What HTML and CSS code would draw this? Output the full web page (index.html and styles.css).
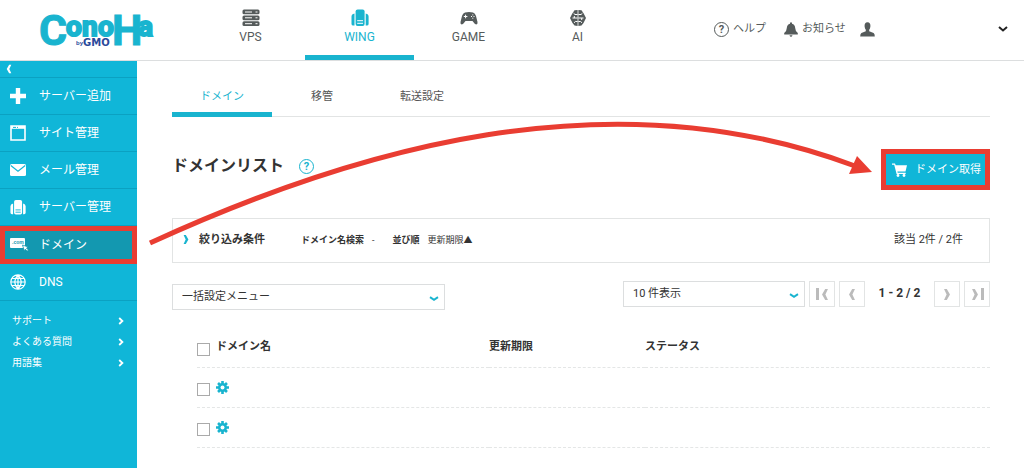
FILE: index.html
```html
<!DOCTYPE html>
<html lang="ja">
<head>
<meta charset="utf-8">
<title>ドメインリスト | ConoHa</title>
<meta name="viewport" content="width=device-width, initial-scale=1">
<link rel="stylesheet" href="styles.css">
</head>
<body>
<svg class="defs" width="0" height="0" aria-hidden="true">
  <symbol id="i-wing" viewBox="0 0 18 18">
    <rect x="4.600" y=".5" width="9" height="16.500" rx="2"/>
    <path d="M3.500 4.500v12H2.200Q.5 16.500.5 15V7.500Q.5 5 3.500 4.500zM14.700 4.500v12h1.200q1.700 0 1.700-1.500V7.500q0-2.500-2.900-3z"/>
    <path class="cut" d="M6.200 11.700h5.800M6.200 14.300h5.800"/>
  </symbol>
  <symbol id="i-gear" viewBox="0 0 14 14">
    <path fill="none" stroke="currentColor" stroke-width="2.800" d="M7 0v14M0 7h14M2.200 2.200l9.600 9.600M11.800 2.200l-9.600 9.600"/>
    <circle cx="7" cy="7" r="4.800"/><circle cx="7" cy="7" r="2.100" fill="#fff"/>
  </symbol>
  <symbol id="i-left" viewBox="0 0 8 14"><path d="M4.200 1H7.200L4.400 7l2.800 6h-3L.8 7z"/></symbol>
  <symbol id="i-right" viewBox="0 0 8 14"><path d="M3.800 1H.8l2.800 6L.8 13h3L7.200 7z"/></symbol>
  <symbol id="i-smile" viewBox="0 0 10 6"><path fill="none" stroke="currentColor" stroke-width="2" d="M1 1.200L5 3.800 9 1.200"/></symbol>
  <symbol id="i-chev" viewBox="0 0 6 8"><path fill="none" stroke="currentColor" stroke-width="1.800" d="M1.200 1l3.200 3-3.200 3"/></symbol>
</svg>

<header class="header">
  <a class="logo" href="#" aria-label="ConoHa by GMO">
    <svg width="132" height="60" viewBox="30 0 132 60" aria-hidden="true">
      <g class="logo-main">
        <text class="big" x="39" y="45">C</text>
        <text class="small" x="66" y="36">o</text>
        <text class="small" x="82" y="36">n</text>
        <text class="small" x="98" y="36">o</text>
        <text class="tall" x="112" y="45">H</text>
        <text class="small" x="138" y="36">a</text>
      </g>
      <text class="by" x="76" y="45">by</text>
      <text class="gmo" x="83" y="46">GMO</text>
    </svg>
  </a>
  <nav class="products">
    <a class="product" href="#">
      <svg width="18" height="18" viewBox="0 0 18 18"><rect x=".5" y=".5" width="17" height="4.800" rx="1.500"/><rect x=".5" y="6.400" width="17" height="4.800" rx="1.500"/><rect x=".5" y="12.300" width="17" height="4.800" rx="1.500"/><path class="cut" d="M3 3h7M3 8.800h7M3 14.700h7M13.500 3h2M13.500 8.800h2M13.500 14.700h2"/></svg>
      <span>VPS</span></a>
    <a class="product active" href="#"><svg width="18" height="18"><use href="#i-wing"/></svg><span>WING</span></a>
    <a class="product" href="#">
      <svg width="18" height="18" viewBox="0 0 18 18"><path d="M5 3.500Q9 2.700 13 3.500q2.200.5 3 3.500l1.500 6q.4 2.300-1.200 2.500-1.200 0-3.800-3.500h-7q-2.600 3.500-3.800 3.500Q.1 15.300.5 13L2 7q.8-3 3-3.500z"/><path class="cut" d="M3.800 7.500h3.600M5.600 5.700v3.600M11 7.500h1M13.500 7.500h1M12.800 5.400v1M12.800 8.700v1"/></svg>
      <span>GAME</span></a>
    <a class="product" href="#">
      <svg width="18" height="18" viewBox="0 0 18 18"><path d="M5.500 1.200L8.600 1v16l-3.100-.5L3.500 14 1 9l2.300-4.500zM12.500 1.200L9.400 1v16l3.100-.5 2-2.500L17 9l-2.300-4.500z"/><path class="cut" d="M8.600 5.500H6L4.600 4.300M8.600 9H3.500M5.300 9v-2M8.600 12.500H6.400L5 13.800M9.400 5.500H12l1.400-1.200M9.400 9h5.100M12.700 9v2M9.400 12.500h2.200l1.400 1.300"/></svg>
      <span>AI</span></a>
  </nav>
  <div class="tools">
    <a class="tool" href="#"><span class="help">?</span><span>ヘルプ</span></a>
    <a class="tool notice" href="#"><svg width="14" height="15" viewBox="0 0 14 15"><path d="M6 .5h2v1.200q3 .8 3.200 4.300.2 3.600 2.600 5v1.500H.2V11q2.400-1.400 2.600-5Q3 2.500 6 1.700zM5.500 13.200h3q-.4 1.500-1.500 1.500t-1.500-1.500z"/></svg><span>お知らせ</span></a>
    <button class="account" type="button" aria-label="アカウント"><svg width="15" height="15" viewBox="0 0 15 15"><path d="M7.500.3q3.300.2 2.900 4.300-.3 2.300-1.200 3.200v1.400l4.400 1.700q1.200.5 1.200 3.700H.2q0-3.200 1.200-3.700l4.400-1.700V7.800q-.9-.9-1.200-3.200Q4.200.5 7.500.3z"/></svg>
      <svg width="10" height="8" viewBox="0 0 10 8"><path fill="none" stroke="#222" stroke-width="2" d="M1 2l4 3.500L9 2"/></svg></button>
  </div>
</header>

<div class="body">
  <aside class="side">
    <button class="collapse" type="button" aria-label="閉じる"><svg width="6" height="10"><use href="#i-left"/></svg></button>
    <nav>
      <a class="item" href="#"><svg width="16" height="16" viewBox="0 0 16 16"><path d="M5.800 0h4.400v5.800H16v4.400h-5.800V16H5.800v-5.800H0V5.800h5.800z"/></svg>サーバー追加</a>
      <a class="item" href="#"><svg width="16" height="16" viewBox="0 0 16 16"><path fill="none" stroke="currentColor" stroke-width="1.600" d="M1 1h14v14H1z"/><path d="M1 1h14v2.800H1z"/><path stroke="#10b6d8" stroke-width="1" d="M3 2.400h3M7 2.400h1"/></svg>サイト管理</a>
      <a class="item" href="#"><svg width="16" height="12" viewBox="0 0 16 12"><rect width="16" height="12" rx="1.500"/><path fill="none" stroke="#10b6d8" stroke-width="1.100" d="M.8 1.500L8 7.200l7.200-5.700"/></svg>メール管理</a>
      <a class="item" href="#"><svg width="16" height="17"><use href="#i-wing"/></svg>サーバー管理</a>
      <a class="item current" href="#"><svg width="19" height="13" viewBox="0 0 19 13"><rect y="0" width="15" height="10" rx="1"/><text class="com" x="2" y="6">.com</text><path stroke="#1398b0" stroke-width=".8" d="M12.500 7l5.800 2-1.800 1.100 1.900 1.900-1.200 1.100-1.900-1.900-1 1.700z"/></svg>ドメイン</a>
      <a class="item last" href="#"><svg width="16" height="16" viewBox="0 0 16 16"><path fill="none" stroke="currentColor" stroke-width="1.200" d="M8 .8a7.200 7.200 0 100 14.400A7.200 7.200 0 008 .8zM8 1v14M1 8h14M2 4.500h12M2 11.500h12M8 1Q1.500 8 8 15M8 1q6.500 7 0 14"/></svg>DNS</a>
    </nav>
    <nav class="support">
      <a href="#">サポート<svg width="6" height="8"><use href="#i-chev"/></svg></a>
      <a href="#">よくある質問<svg width="6" height="8"><use href="#i-chev"/></svg></a>
      <a href="#">用語集<svg width="6" height="8"><use href="#i-chev"/></svg></a>
    </nav>
  </aside>

  <main class="main">
    <nav class="tabs"><a class="tab on" href="#">ドメイン</a><a class="tab" href="#">移管</a><a class="tab" href="#">転送設定</a></nav>
    <div class="title">
      <h1>ドメインリスト</h1><a class="help accent" href="#">?</a>
      <button class="buy" type="button"><svg width="15" height="14" viewBox="0 0 15 14"><path d="M0 .5h3l.7 1.700H15L13.500 8.500H5.400l.3 1.200h8v1.200H4.600L2.200 1.800H0z"/><circle cx="6" cy="12.500" r="1.400"/><circle cx="12" cy="12.500" r="1.400"/></svg>ドメイン取得</button>
    </div>
    <section class="filter">
      <svg class="teal" width="6" height="11"><use href="#i-right"/></svg>
      <h2>絞り込み条件</h2>
      <p class="cond"><b>ドメイン名検索</b><span>-</span></p>
      <p class="cond"><b>並び順</b><span>更新期限▲</span></p>
      <p class="count">該当 2件 / 2件</p>
    </section>
    <div class="controls">
      <div class="select bulk"><select aria-label="一括設定"><option>一括設定メニュー</option></select><svg width="10" height="6"><use href="#i-smile"/></svg></div>
      <div class="pager">
        <div class="select size"><select aria-label="表示件数"><option>10 件表示</option></select><svg width="10" height="6"><use href="#i-smile"/></svg></div>
        <button type="button" aria-label="最初"><i></i><svg width="8" height="13"><use href="#i-left"/></svg></button>
        <button type="button" aria-label="前へ"><svg width="8" height="13"><use href="#i-left"/></svg></button>
        <span class="range">1 - 2 / 2</span>
        <button type="button" aria-label="次へ"><svg width="8" height="13"><use href="#i-right"/></svg></button>
        <button type="button" aria-label="最後"><svg width="8" height="13"><use href="#i-right"/></svg><i></i></button>
      </div>
    </div>
    <table class="list">
      <thead><tr><th class="name"><div class="cell"><input type="checkbox" id="all"><label for="all">ドメイン名</label></div></th><th class="date">更新期限</th><th>ステータス</th></tr></thead>
      <tbody>
        <tr><td><div class="cell"><input type="checkbox" aria-label="選択 1"><button type="button" class="gear" aria-label="設定"><svg width="13" height="13"><use href="#i-gear"/></svg></button></div></td><td></td><td></td></tr>
        <tr><td><div class="cell"><input type="checkbox" aria-label="選択 2"><button type="button" class="gear" aria-label="設定"><svg width="13" height="13"><use href="#i-gear"/></svg></button></div></td><td></td><td></td></tr>
      </tbody>
    </table>
  </main>
</div>
<svg class="arrow" width="880" height="260" aria-hidden="true"><path class="line" d="M150 243C355 149 610 74 855 166"/><path class="head" d="M857 156l15 16-23 2z"/></svg>
</body>
</html>
```
FILE: styles.css
```css
:root { --teal: #19b4cf; --side: #10b6d8; --red: #e93d32; --line: #e2e4e4; --cut: #fff; }
* { box-sizing: border-box; }
body {
  margin: 0; min-height: 100vh; display: flex; flex-direction: column; position: relative;
  background: #fff; color: #333; font: 11px/16px Roboto, "Noto Sans CJK JP", sans-serif;
}
a { color: inherit; text-decoration: none; }
h1, h2, p { margin: 0; }
button { font: inherit; color: inherit; background: none; border: 0; padding: 0; cursor: pointer; }
svg { fill: currentColor; flex: none; display: block; }
.defs { position: absolute; }
.cut { fill: none; stroke: var(--cut); stroke-width: 1; }

.header { height: 61px; display: flex; border-bottom: 1px solid #dcdedf; color: #555b5b; }
.logo { width: 196px; padding-left: 30px; }
.logo-main { fill: var(--teal); stroke: var(--teal); font-family: Roboto, sans-serif; font-weight: 700; }
.big { font-size: 43px; stroke-width: 1; }
.tall { font-size: 43px; stroke-width: 1; }
.small { font-size: 28px; stroke-width: 2; }
.by { font: 700 6px "Liberation Sans", sans-serif; fill: #2b4a9b; }
.gmo { font: 700 10px "DejaVu Sans", sans-serif; fill: #2b4a9b; }
.products { display: flex; }
.product { width: 109px; padding-top: 9px; display: flex; flex-direction: column; align-items: center; gap: 2px; font-size: 12px; border-bottom: 5px solid transparent; }
.product.active { color: var(--teal); border-color: var(--teal); }
.tools { flex: 1; display: flex; align-items: center; padding: 0 16px 2px 82px; }
.tool { display: flex; align-items: center; gap: 4px; }
.notice { margin: 0 14px 0 18px; }
.help { width: 15px; height: 15px; border: 1px solid currentColor; border-radius: 50%; font-size: 11px; font-weight: 700; line-height: 13px; text-align: center; }
.account { flex: 1; display: flex; justify-content: space-between; align-items: center; }

.body { flex: 1; display: flex; }
.side { width: 137px; background: var(--side); color: #fff; --cut: var(--side); }
.collapse { width: 100%; height: 17px; padding-left: 6px; display: block; border-bottom: 1px solid #0ba1c2; }
.item { height: 37px; padding-left: 10px; display: grid; grid-template-columns: 29px 1fr; align-items: center; font-size: 12px; border-bottom: 1px solid #0ba1c2; }
.item.current { height: 38px; position: relative; background: #1398b0; }
.item.current::after { content: ""; position: absolute; inset: 0 0 -1px; border: 5px solid var(--red); }
.com { font: 700 5px "Liberation Sans", sans-serif; fill: #1398b0; }
.support { padding: 9px 13px 0 12px; font-size: 10px; line-height: 21px; }
.support a { display: flex; justify-content: space-between; align-items: center; }

.main { flex: 1; min-width: 0; padding: 15px 34px 0 35px; }
.tabs { display: flex; border-bottom: 1px solid var(--line); color: #555; }
.tab { width: 100px; height: 41px; line-height: 42px; text-align: center; border-bottom: 5px solid transparent; margin-bottom: -1px; }
.tab.on { color: var(--teal); border-color: var(--teal); }
.title { display: flex; align-items: center; padding-top: 32px; }
h1 { font-size: 16px; line-height: 24px; margin-bottom: 8px; }
.accent { color: var(--teal); margin: 0 0 6px 15px; }
.buy { position: relative; margin-left: auto; width: 109px; height: 41px; background: var(--side); color: #fff; display: flex; align-items: center; justify-content: flex-end; gap: 8px; padding-right: 9px; }
.buy::after { content: ""; position: absolute; inset: 0; border: 5px solid var(--red); }
.filter { margin-top: 28px; height: 45px; display: flex; align-items: center; padding: 0 26px 2px 10px; border: 1px solid var(--line); }
.teal, .gear { color: var(--teal); }
h2 { font-size: 11px; margin: 0 36px 0 10px; }
.cond { display: flex; gap: 8px; font-size: 9px; margin-right: 18px; }
.count { margin-left: auto; }
.controls { display: flex; justify-content: space-between; padding-top: 18px; }
.select { position: relative; height: 26px; }
.select select { appearance: none; width: 100%; height: 100%; border: 1px solid #dcdedf; border-radius: 0; background: #fff; color: #333; font: inherit; padding: 0 24px 1px 9px; }
.select svg { position: absolute; right: 6px; top: 12px; color: var(--teal); }
.bulk { width: 273px; margin-top: 3px; }
.size { width: 182px; }
.pager { display: flex; gap: 4px; align-items: flex-start; }
.pager button { width: 26px; height: 26px; border: 1px solid var(--line); color: #bbb; display: flex; align-items: center; justify-content: center; gap: 2px; }
.pager i { width: 3px; height: 12px; background: currentColor; }
.range { width: 61px; text-align: center; font-weight: 700; line-height: 24px; font-size: 12px; }
.list { margin: 17px 0 0 25px; width: calc(100% - 25px); border-collapse: collapse; table-layout: fixed; }
.list th, .list td { height: 40px; padding: 0; text-align: left; border-bottom: 1px dashed #e4e6e6; }
th.name { width: 292px; } th.date { width: 156px; }
.cell { display: flex; align-items: center; gap: 6px; }
.cell input { appearance: none; width: 13px; height: 13px; margin: 5px 0 0; border: 1px solid #aaa; }
.arrow { position: absolute; left: 0; top: 0; pointer-events: none; }
.line { fill: none; stroke: var(--red); stroke-width: 5; }
.head { fill: var(--red); }
```
